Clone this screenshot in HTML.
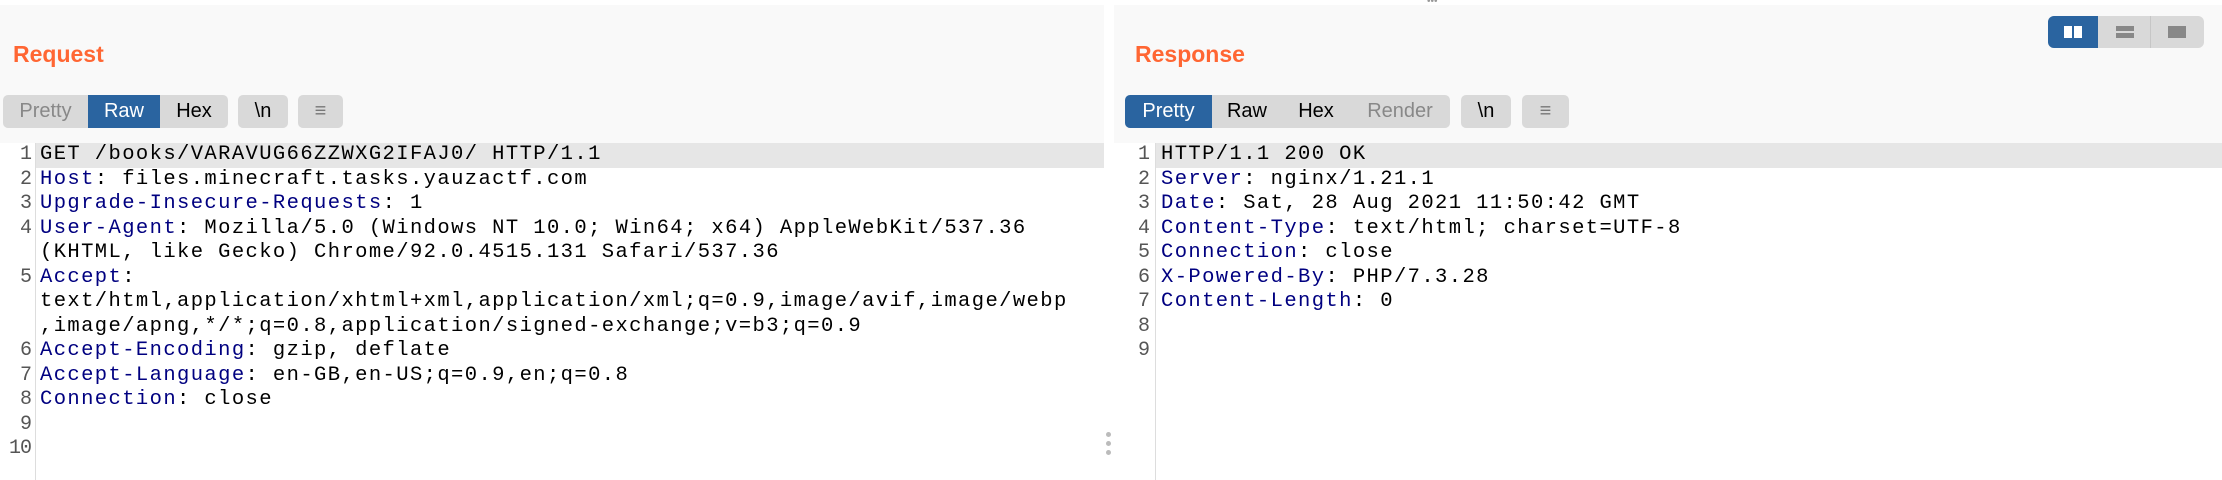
<!DOCTYPE html>
<html><head><meta charset="utf-8"><style>
*{margin:0;padding:0;box-sizing:border-box}
body{width:2222px;height:480px;background:#fff;position:relative;overflow:hidden;font-family:"Liberation Sans",sans-serif}
.abs{position:absolute}
.panel{position:absolute;top:5px;height:138px;background:#f9f9f9}
.title{position:absolute;top:41px;font-weight:bold;font-size:23px;color:#ff6633}
.btn{position:absolute;top:95px;height:33px;background:#d9d9d9;font-size:20px;line-height:33px;text-align:center;color:#000}
.ln{position:absolute;font-family:"Liberation Mono",monospace;font-size:20px;color:#555;text-align:right;width:28px}
.tx{position:absolute;font-family:"Liberation Mono",monospace;font-size:20.5px;letter-spacing:1.4px;color:#000;white-space:pre}
.k{color:#000080}
.hl{position:absolute;height:25px;background:#e6e6e6}
</style></head><body>
<div class="panel" style="left:0;width:1104px"></div>
<div class="panel" style="left:1114px;width:1108px"></div>
<div class="title" style="left:13px">Request</div>
<div class="title" style="left:1135px">Response</div>

<div class="btn" style="left:3px;width:85px;color:#888;border-radius:5px 0 0 5px">Pretty</div>
<div class="btn" style="left:88px;width:72px;background:#2a64a0;color:#fff">Raw</div>
<div class="btn" style="left:160px;width:68px;border-radius:0 5px 5px 0">Hex</div>
<div class="btn" style="left:238px;width:50px;border-radius:5px">\n</div>
<div class="btn" style="left:298px;width:45px;border-radius:5px;color:#777">≡</div>

<div class="btn" style="left:1125px;width:87px;background:#2a64a0;color:#fff;border-radius:5px 0 0 5px">Pretty</div>
<div class="btn" style="left:1212px;width:70px">Raw</div>
<div class="btn" style="left:1282px;width:68px">Hex</div>
<div class="btn" style="left:1350px;width:100px;color:#888;border-radius:0 5px 5px 0">Render</div>
<div class="btn" style="left:1461px;width:50px;border-radius:5px">\n</div>
<div class="btn" style="left:1522px;width:47px;border-radius:5px;color:#777">≡</div>

<div class="abs" style="left:2048px;top:16px;width:156px;height:32px;background:#d9d9d9;border-radius:6px;overflow:hidden">
 <div class="abs" style="left:0;top:0;width:50px;height:32px;background:#2a64a0"></div>
 <div class="abs" style="left:16px;top:10px;width:8px;height:12px;background:#fff"></div>
 <div class="abs" style="left:26px;top:10px;width:8px;height:12px;background:#fff"></div>
 <div class="abs" style="left:102px;top:0;width:1px;height:32px;background:#c6c6c6"></div>
 <div class="abs" style="left:68px;top:10px;width:18px;height:5px;background:#888"></div>
 <div class="abs" style="left:68px;top:17px;width:18px;height:5px;background:#888"></div>
 <div class="abs" style="left:120px;top:10px;width:18px;height:12px;background:#888"></div>
</div>
<div class="abs" style="left:1427px;top:0;width:16px;height:4px;color:#999;font-size:10px;line-height:4px">•••</div>

<div class="hl" style="left:36px;top:143px;width:1068px"></div>
<div class="hl" style="left:1156px;top:143px;width:1066px"></div>
<div class="abs" style="left:35px;top:143px;width:1px;height:337px;background:#ddd"></div>
<div class="abs" style="left:1155px;top:143px;width:1px;height:337px;background:#ddd"></div>

<div class="ln" style="left:3px;top:143px;line-height:24.5px;width:28px;letter-spacing:-1px">1<br>2<br>3<br>4<br><br>5<br><br><br>6<br>7<br>8<br>9<br>10</div>
<div class="tx" style="left:40px;top:143px;line-height:24.5px">GET /books/VARAVUG66ZZWXG2IFAJ0/ HTTP/1.1
<span class="k">Host</span>: files.minecraft.tasks.yauzactf.com
<span class="k">Upgrade-Insecure-Requests</span>: 1
<span class="k">User-Agent</span>: Mozilla/5.0 (Windows NT 10.0; Win64; x64) AppleWebKit/537.36
(KHTML, like Gecko) Chrome/92.0.4515.131 Safari/537.36
<span class="k">Accept</span>:
text/html,application/xhtml+xml,application/xml;q=0.9,image/avif,image/webp
,image/apng,*/*;q=0.8,application/signed-exchange;v=b3;q=0.9
<span class="k">Accept-Encoding</span>: gzip, deflate
<span class="k">Accept-Language</span>: en-GB,en-US;q=0.9,en;q=0.8
<span class="k">Connection</span>: close</div>

<div class="ln" style="left:1122px;top:143px;line-height:24.5px">1<br>2<br>3<br>4<br>5<br>6<br>7<br>8<br>9</div>
<div class="tx" style="left:1161px;top:143px;line-height:24.5px">HTTP/1.1 200 OK
<span class="k">Server</span>: nginx/1.21.1
<span class="k">Date</span>: Sat, 28 Aug 2021 11:50:42 GMT
<span class="k">Content-Type</span>: text/html; charset=UTF-8
<span class="k">Connection</span>: close
<span class="k">X-Powered-By</span>: PHP/7.3.28
<span class="k">Content-Length</span>: 0</div>

<div class="abs" style="left:1106px;top:432px;width:5px;height:5px;border-radius:50%;background:#bbb"></div>
<div class="abs" style="left:1106px;top:441px;width:5px;height:5px;border-radius:50%;background:#bbb"></div>
<div class="abs" style="left:1106px;top:450px;width:5px;height:5px;border-radius:50%;background:#bbb"></div>
</body></html>
